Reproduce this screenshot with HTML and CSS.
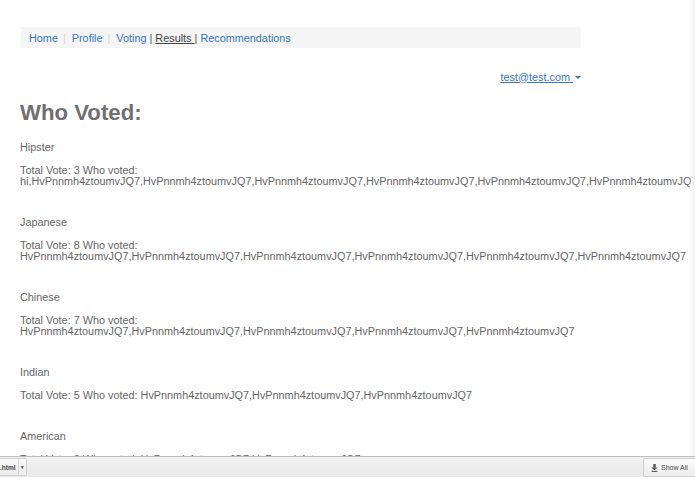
FILE: index.html
```html
<!DOCTYPE html>
<html>
<head>
<meta charset="utf-8">
<link rel="stylesheet" href="styles.css">
</head>
<body>
<div class="container">
  <nav class="navbar">
    <a href="#" class="nav-link">Home</a><span class="divider">|</span><a href="#" class="nav-link">Profile</a><span class="divider">|</span><a href="#" class="nav-link">Voting</a> <span class="bar">|</span> <a href="#" class="nav-link active">Results </a><span class="bar">|</span> <a href="#" class="nav-link">Recommendations</a>
  </nav>
  <div class="user-row">
    <a href="#" class="user-link">test@test.com <span class="caret"></span></a>
  </div>
  <h1 class="title">Who Voted:</h1>

  <div class="vote">
    <p class="name">Hipster</p>
    <p class="total">Total Vote: 3 Who voted: hi,HvPnnmh4ztoumvJQ7,HvPnnmh4ztoumvJQ7,HvPnnmh4ztoumvJQ7,HvPnnmh4ztoumvJQ7,HvPnnmh4ztoumvJQ7,HvPnnmh4ztoumvJQ7</p>
  </div>
  <div class="vote">
    <p class="name">Japanese</p>
    <p class="total">Total Vote: 8 Who voted: HvPnnmh4ztoumvJQ7,HvPnnmh4ztoumvJQ7,HvPnnmh4ztoumvJQ7,HvPnnmh4ztoumvJQ7,HvPnnmh4ztoumvJQ7,HvPnnmh4ztoumvJQ7</p>
  </div>
  <div class="vote">
    <p class="name">Chinese</p>
    <p class="total">Total Vote: 7 Who voted: HvPnnmh4ztoumvJQ7,HvPnnmh4ztoumvJQ7,HvPnnmh4ztoumvJQ7,HvPnnmh4ztoumvJQ7,HvPnnmh4ztoumvJQ7</p>
  </div>
  <div class="vote">
    <p class="name">Indian</p>
    <p class="total">Total Vote: 5 Who voted: HvPnnmh4ztoumvJQ7,HvPnnmh4ztoumvJQ7,HvPnnmh4ztoumvJQ7</p>
  </div>
  <div class="vote">
    <p class="name">American</p>
    <p class="total">Total Vote: 2 Who voted: HvPnnmh4ztoumvJQ7,HvPnnmh4ztoumvJQ7</p>
  </div>
</div>

<div class="edge-shadow"></div>

<div class="download-shelf">
  <div class="shelf-bar">
    <div class="file-btn"><span class="file-name">.html</span><span class="file-sep"></span><span class="file-caret">&#9662;</span></div>
    <div class="show-all">
      <svg class="dl-icon" width="7" height="8" viewBox="0 0 7 8"><rect x="2.3" y="0" width="2.4" height="3.6" fill="#555"/><path d="M0.3 3.4 L6.7 3.4 L3.5 6.3 Z" fill="#555"/><rect x="0.6" y="6.8" width="5.8" height="1.1" fill="#555"/></svg>
      <span>Show All</span>
    </div>
  </div>
  <div class="shelf-bottom"></div>
</div>
</body>
</html>
```
FILE: styles.css
```css
html, body {
  margin: 0;
  padding: 0;
  background: #ffffff;
}
body {
  font-family: "Liberation Sans", Arial, Helvetica, sans-serif;
  font-size: 10.85px;
  line-height: 11px;
  color: #666666;
  overflow: hidden;
}
.container {
  margin-left: 20px;
  width: 561px;
  padding-top: 27px;
}
.navbar {
  background: #f5f5f5;
  height: 20px;
  padding-top: 1px;
  line-height: 21px;
  padding-left: 8px;
  margin-left: 1px;
  white-space: nowrap;
  color: #555;
}
.nav-link {
  color: #3878bb;
  text-decoration: none;
}
.nav-link.active {
  color: #444;
  text-decoration: underline;
}
.divider {
  color: #d6d6d6;
  margin: 0 6px 0 5px;
}
.bar {
  color: #555;
}
.user-row {
  margin-top: 23.5px;
  text-align: right;
  height: 11px;
}
.user-link {
  color: #3878bb;
  text-decoration: underline;
}
.caret {
  display: inline-block;
  width: 0;
  height: 0;
  border-left: 3px solid transparent;
  border-right: 3px solid transparent;
  border-top: 3px solid #3878bb;
  vertical-align: middle;
  margin-left: 2px;
}
.title {
  margin: 17.5px 0 15.5px 0;
  font-size: 22.2px;
  line-height: 26px;
  font-weight: bold;
  color: #707070;
}
.vote p {
  margin: 0;
}
.name {
  margin-bottom: 12px !important;
}
.total {
  margin-bottom: 30px !important;
}
.edge-shadow {
  position: fixed;
  top: 0;
  right: 0;
  width: 6px;
  height: 456px;
  background: linear-gradient(to right, rgba(245,245,245,0), #f1f1f1);
}
.download-shelf {
  position: fixed;
  left: 0;
  right: 0;
  top: 456px;
  bottom: 0;
  background: #ffffff;
}
.shelf-bar {
  height: 21px;
  border-top: 1px solid #bdbdbd;
  box-sizing: border-box;
  background: linear-gradient(#f2f2f2, #e8e8e8);
  display: flex;
  justify-content: space-between;
  align-items: center;
}
.file-btn {
  height: 18px;
  width: 27px;
  box-sizing: border-box;
  border: 1px solid #cfcfcf;
  border-left: none;
  border-radius: 0 2px 2px 0;
  background: linear-gradient(#fafafa, #ececec);
  display: flex;
  align-items: center;
  font-size: 6.5px;
  font-weight: bold;
  color: #444;
}
.file-name {
  width: 18px;
}
.file-sep {
  width: 1px;
  height: 16px;
  background: #d8d8d8;
}
.file-caret {
  font-size: 5px;
  margin-left: 2px;
  color: #555;
}
.show-all {
  height: 19px;
  width: 52px;
  box-sizing: border-box;
  border: 1px solid #cfcfcf;
  border-right: none;
  border-radius: 2px 0 0 2px;
  background: linear-gradient(#fbfbfb, #ededed);
  display: flex;
  align-items: center;
  gap: 3px;
  padding-left: 7px;
  font-size: 7px;
  color: #444;
  margin-top: 1px;
}
.dl-icon {
  display: block;
}
```
